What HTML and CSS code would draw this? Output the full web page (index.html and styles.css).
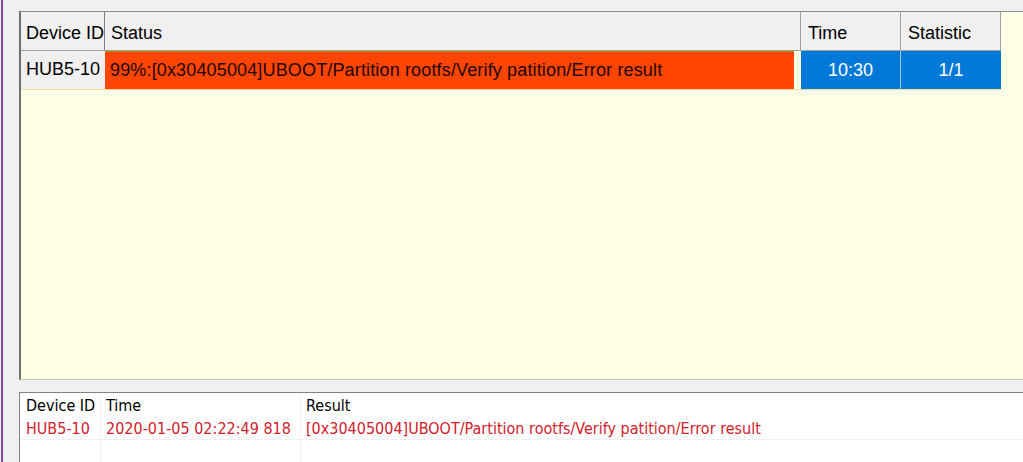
FILE: index.html
```html
<!DOCTYPE html>
<html>
<head>
<meta charset="utf-8">
<link rel="stylesheet" href="styles.css">
</head>
<body>
<div class="app">
  <div class="grid-panel">
    <div class="grid-header">
      <div class="hcell c-id">Device ID</div>
      <div class="hcell c-status">Status</div>
      <div class="hcell c-time">Time</div>
      <div class="hcell c-stat">Statistic</div>
    </div>
    <div class="grid-row">
      <div class="rcell c-id id-cell">HUB5-10</div>
      <div class="rcell c-status status-cell"><div class="status-bar">99%:[0x30405004]UBOOT/Partition rootfs/Verify patition/Error result</div></div>
      <div class="rcell c-time blue-cell sep">10:30</div>
      <div class="rcell c-stat blue-cell">1/1</div>
    </div>
  </div>
  <div class="log-panel">
    <div class="log-head">
      <div class="lcell l-id">Device ID</div>
      <div class="lcell l-time">Time</div>
      <div class="lcell l-res">Result</div>
    </div>
    <div class="log-row err">
      <div class="lcell l-id">HUB5-10</div>
      <div class="lcell l-time">2020-01-05 02:22:49 818</div>
      <div class="lcell l-res">[0x30405004]UBOOT/Partition rootfs/Verify patition/Error result</div>
    </div>
    <div class="log-row empty">
      <div class="lcell l-id"></div>
      <div class="lcell l-time"></div>
      <div class="lcell l-res"></div>
    </div>
  </div>
</div>
</body>
</html>
```

FILE: styles.css
```css
html, body {
  margin: 0;
  padding: 0;
  background: #f0f0f0;
  overflow: hidden;
}
.app {
  width: 1022px;
  height: 462px;
  margin-left: 1px;
  border-left: 2px solid #84489c;
  padding-left: 16px;
  box-sizing: border-box;
  display: flex;
  flex-direction: column;
  font-family: "Liberation Sans", Arial, sans-serif;
  overflow: hidden;
}
.grid-panel {
  margin-top: 11px;
  height: 369px;
  box-sizing: border-box;
  background: #ffffe8;
  border-top: 1px solid #8c8c8c;
  border-left: 2px solid #707070;
  border-bottom: 1px solid #c4c4c4;
  flex-shrink: 0;
}
.grid-header {
  display: flex;
  height: 39px;
  box-sizing: border-box;
  width: 980px;
  border-bottom: 1px solid #a0a0a0;
  background: #f0f0f0;
}
.hcell {
  box-sizing: border-box;
  border-right: 1px solid #a0a0a0;
  font-size: 18px;
  line-height: 36px;
  padding-top: 3px;
  padding-left: 6px;
  color: #000;
  white-space: nowrap;
  overflow: hidden;
}
.hcell.c-id { padding-left: 5px; border-right-color: #808080; }
.c-id { width: 84px; flex-shrink: 0; }
.c-status { width: 696px; flex-shrink: 0; }
.c-time { width: 100px; flex-shrink: 0; }
.c-stat { width: 100px; flex-shrink: 0; }
.hcell.c-time, .hcell.c-stat { padding-left: 7px; }
.grid-row {
  display: flex;
  height: 39px;
  width: 980px;
  box-sizing: border-box;
  border-bottom: 1px solid #f2df96;
}
.rcell {
  box-sizing: border-box;
  font-size: 18px;
  line-height: 37px;
  white-space: nowrap;
  overflow: hidden;
}
.id-cell {
  background: #f0f0f0;
  padding-left: 5px;
  color: #000;
}
.status-cell {
  padding-right: 7px;
}
.status-bar {
  height: 38px;
  box-sizing: border-box;
  background: #ff4500;
  border-top: 1px solid #b88a10;
  padding-left: 5px;
  line-height: 36px;
  letter-spacing: 0.15px;
  color: #1c0800;
}
.blue-cell {
  background: #0078d7;
  color: #fff;
  text-align: center;
  line-height: 38px;
  height: 38px;
}
.blue-cell.sep { border-right: 1px solid #9cc8ee; }
.log-panel {
  margin-top: 12px;
  flex: 1;
  background: #fff;
  border-top: 1px solid #828282;
  border-left: 1px solid #828282;
  font-family: "DejaVu Sans", Verdana, sans-serif;
  font-stretch: condensed;
  font-size: 16px;
}
.log-head, .log-row {
  display: flex;
}
.log-head .lcell {
  height: 24px;
  padding-top: 4px;
  line-height: 18px;
  color: #000;
}
.log-row .lcell {
  height: 23px;
  padding-top: 3px;
  line-height: 18px;
  border-bottom: 1px solid #f0f0f0;
}
.log-row.empty .lcell { border-bottom: none; height: 30px; }
.lcell {
  box-sizing: border-box;
  white-space: nowrap;
  padding-left: 5px;
}
.l-id { width: 81px; padding-left: 6px; border-right: 1px solid #f0f0f0; }
.l-time { width: 200px; border-right: 1px solid #f0f0f0; }
.l-res { flex: 1; }
.err .lcell { color: #d2202c; }
```
